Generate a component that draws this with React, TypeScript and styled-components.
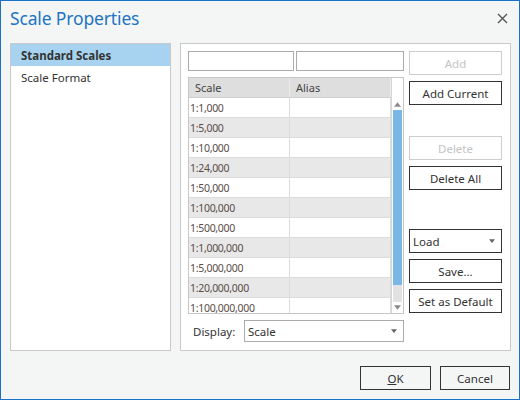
import React from "react";
import styled, { createGlobalStyle } from "styled-components";

const GlobalStyle = createGlobalStyle`
  html, body {
    margin: 0;
    padding: 0;
    background: #f4f6f6;
  }
  body {
    font-family: "Noto Sans", "Open Sans", sans-serif;
  }
  * { box-sizing: border-box; }
`;

const Window = styled.div`
  width: 520px;
  height: 400px;
  border: 1px solid #1a72c6;
  background: #f4f6f6;
  display: flex;
  flex-direction: column;
  color: #222;
`;

const TitleBar = styled.div`
  height: 42px;
  display: flex;
  align-items: center;
  justify-content: space-between;
  padding: 0 10px 8px 9px;
`;

const Title = styled.div`
  font-size: 17.5px;
  color: #1f74c2;
  letter-spacing: -0.15px;
`;

const CloseButton = styled.div`
  width: 14px;
  height: 14px;
  display: flex;
  align-items: center;
  justify-content: center;
`;

const Body = styled.div`
  display: flex;
  gap: 9px;
  padding: 0 8px 0 9px;
  height: 308px;
`;

const Panel = styled.div<{ $width: number }>`
  width: ${(p) => p.$width}px;
  height: 100%;
  background: #fff;
  border: 1px solid #c9c9c9;
`;

const NavItem = styled.div<{ $selected?: boolean }>`
  height: 22px;
  display: flex;
  align-items: center;
  padding-left: 10px;
  font-size: 11.5px;
  font-weight: ${(p) => (p.$selected ? 700 : 400)};
  background: ${(p) => (p.$selected ? "#a7d3f1" : "transparent")};
  color: #333;
`;

const Content = styled.div`
  display: flex;
  gap: 5px;
  padding: 7px;
  height: 100%;
`;

const LeftColumn = styled.div`
  width: 216px;
  display: flex;
  flex-direction: column;
`;

const InputRow = styled.div`
  display: flex;
  gap: 2px;
  height: 20px;
`;

const TextBox = styled.div<{ $width: number }>`
  width: ${(p) => p.$width}px;
  height: 100%;
  border: 1px solid #ababab;
  background: #fff;
`;

const Table = styled.div`
  margin-top: 6px;
  height: 237px;
  border: 1px solid #c6c6c6;
  display: flex;
  overflow: hidden;
`;

const Grid = styled.div`
  width: 202px;
  display: flex;
  flex-direction: column;
  overflow: hidden;
`;

const HeaderRow = styled.div`
  height: 20px;
  flex: none;
  display: flex;
  background: #dedede;
  border-bottom: 1px solid #cfcfcf;
`;

const HeaderCell = styled.div<{ $width: number }>`
  width: ${(p) => p.$width}px;
  padding-left: 6px;
  display: flex;
  align-items: center;
  font-size: 11px;
  color: #444;
  border-right: 1px solid #ececec;
`;

const Row = styled.div<{ $alt: boolean }>`
  height: 20px;
  flex: none;
  display: flex;
  background: ${(p) => (p.$alt ? "#e8e8e8" : "#fff")};
  border-bottom: 1px solid #dcdcdc;
`;

const Cell = styled.div<{ $width: number }>`
  width: ${(p) => p.$width}px;
  padding-left: 1px;
  display: flex;
  align-items: center;
  font-size: 10.5px;
  letter-spacing: -0.3px;
  color: #5a4c47;
  border-right: 1px solid #dcdcdc;
`;

const ScrollBar = styled.div`
  flex: 1;
  border-left: 1px solid #d6d6d6;
  background: #fff;
  display: flex;
  flex-direction: column;
  align-items: center;
  padding-top: 21px;
`;

const ScrollArrow = styled.div`
  height: 11px;
  width: 100%;
  display: flex;
  align-items: center;
  justify-content: center;
`;

const ScrollTrack = styled.div`
  flex: 1;
  width: 9px;
  background: #e2e2e2;
  display: flex;
  flex-direction: column;
`;

const ScrollThumb = styled.div`
  height: 175px;
  background: #79b7e6;
`;

const DisplayRow = styled.div`
  margin-top: 6px;
  display: flex;
  align-items: center;
  height: 22px;
`;

const Label = styled.div`
  width: 56px;
  padding-left: 5px;
  font-size: 11.5px;
  color: #333;
`;

const ComboBox = styled.div`
  flex: 1;
  height: 22px;
  border: 1px solid #ababab;
  background: #fff;
  display: flex;
  align-items: center;
  justify-content: space-between;
  padding: 0 6px 0 3px;
  font-size: 11.5px;
  color: #333;
`;

const RightColumn = styled.div`
  width: 93px;
  display: flex;
  flex-direction: column;
`;

const Button = styled.div<{ $disabled?: boolean; $top?: number }>`
  height: 24px;
  flex: none;
  margin-top: ${(p) => p.$top ?? 0}px;
  border: 1px solid ${(p) => (p.$disabled ? "#cdcdcd" : "#333")};
  background: #fff;
  color: ${(p) => (p.$disabled ? "#c4c4c4" : "#333")};
  display: flex;
  align-items: center;
  justify-content: center;
  font-size: 11.5px;
`;

const Dropdown = styled(Button)`
  justify-content: space-between;
  padding: 0 6px 0 3px;
`;

const Footer = styled.div`
  flex: 1;
  display: flex;
  justify-content: flex-end;
  align-items: flex-start;
  gap: 9px;
  padding: 15px 9px 0 0;
`;

const FooterButton = styled(Button)<{ $width: number }>`
  width: ${(p) => p.$width}px;
  background: #f4f6f6;
`;

const Mnemonic = styled.span`
  text-decoration: underline;
`;

const Triangle = ({ up = false, color = "#6e6e6e", size = 7 }: { up?: boolean; color?: string; size?: number }) => (
  <svg width={size} height={Math.ceil(size / 2) + 1} viewBox="0 0 8 5">
    <path d={up ? "M0 5 L4 0 L8 5 Z" : "M0 0 L8 0 L4 5 Z"} fill={color} />
  </svg>
);

const scales = [
  "1:1,000",
  "1:5,000",
  "1:10,000",
  "1:24,000",
  "1:50,000",
  "1:100,000",
  "1:500,000",
  "1:1,000,000",
  "1:5,000,000",
  "1:20,000,000",
  "1:100,000,000",
];

export default function App() {
  return (
    <>
      <GlobalStyle />
      <Window>
        <TitleBar>
          <Title>Scale Properties</Title>
          <CloseButton>
            <svg width="11" height="11" viewBox="0 0 11 11">
              <path d="M1 1 L10 10 M10 1 L1 10" stroke="#555" strokeWidth="1.4" />
            </svg>
          </CloseButton>
        </TitleBar>
        <Body>
          <Panel $width={161}>
            <NavItem $selected>Standard Scales</NavItem>
            <NavItem>Scale Format</NavItem>
          </Panel>
          <Panel $width={331}>
            <Content>
              <LeftColumn>
                <InputRow>
                  <TextBox $width={106} />
                  <TextBox $width={108} />
                </InputRow>
                <Table>
                  <Grid>
                    <HeaderRow>
                      <HeaderCell $width={101}>Scale</HeaderCell>
                      <HeaderCell $width={101}>Alias</HeaderCell>
                    </HeaderRow>
                    {scales.map((s, i) => (
                      <Row key={s} $alt={i % 2 === 1}>
                        <Cell $width={101}>{s}</Cell>
                        <Cell $width={101} />
                      </Row>
                    ))}
                  </Grid>
                  <ScrollBar>
                    <ScrollArrow>
                      <Triangle up color="#8a8a8a" />
                    </ScrollArrow>
                    <ScrollTrack>
                      <ScrollThumb />
                    </ScrollTrack>
                    <ScrollArrow>
                      <Triangle color="#8a8a8a" />
                    </ScrollArrow>
                  </ScrollBar>
                </Table>
                <DisplayRow>
                  <Label>Display:</Label>
                  <ComboBox>
                    Scale
                    <Triangle size={6} color="#666" />
                  </ComboBox>
                </DisplayRow>
              </LeftColumn>
              <RightColumn>
                <Button $disabled>Add</Button>
                <Button $top={6}>Add Current</Button>
                <Button $disabled $top={31}>Delete</Button>
                <Button $top={6}>Delete All</Button>
                <Dropdown $top={39}>
                  Load
                  <Triangle size={6} color="#666" />
                </Dropdown>
                <Button $top={6}>Save...</Button>
                <Button $top={6}>Set as Default</Button>
              </RightColumn>
            </Content>
          </Panel>
        </Body>
        <Footer>
          <FooterButton $width={71}>
            <span>
              <Mnemonic>O</Mnemonic>K
            </span>
          </FooterButton>
          <FooterButton $width={70}>Cancel</FooterButton>
        </Footer>
      </Window>
    </>
  );
}
